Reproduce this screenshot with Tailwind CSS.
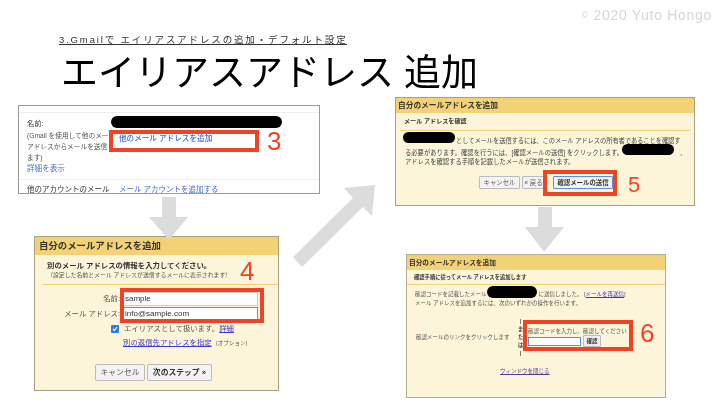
<!DOCTYPE html>
<html lang="ja">
<head>
  <meta charset="UTF-8">
  <title>エイリアスアドレス 追加</title>
  <script src="https://cdn.jsdelivr.net/npm/@tailwindcss/browser@4"></script>
</head>
<body class="bg-white">
<div class="relative w-[720px] h-[405px] overflow-hidden bg-white text-[#333] blur-[0.35px] font-['Liberation_Sans','Noto_Sans_CJK_JP',sans-serif]">

  <!-- Copyright -->
  <div class="absolute right-[8px] top-[7px] text-[14px] leading-[16px] tracking-[0.7px] text-[#d6d6d6] whitespace-nowrap"><span class="text-[9px] align-[2px]">©</span> 2020 Yuto Hongo</div>

  <!-- Heading -->
  <div class="absolute left-[59px] top-[35px] w-[288px] border-b border-[#333] text-[9.5px] leading-[9px] tracking-[1.85px] whitespace-nowrap text-[#333]">3.Gmailで エイリアスアドレスの追加・デフォルト設定</div>
  <h1 class="absolute left-[61px] top-[51px] text-[37px] leading-[38px] font-normal whitespace-nowrap text-black font-['Noto_Sans_CJK_JP',sans-serif]">エイリアスアドレス<span class="ml-[10px]">追加</span></h1>

  <!-- Panel 3 -->
  <div class="absolute left-[18px] top-[105px] w-[302px] h-[89px] overflow-hidden border border-[#9b9b9b] bg-white">
    <div class="mt-[6px] border-t border-[#eeeeee] px-[8px] pt-[5px]">
      <div class="grid grid-cols-[83px_1fr] gap-x-[1px]">
        <div class="whitespace-nowrap text-[6.7px] leading-[11px] text-[#555]">
          <div class="text-[7.2px] leading-[12px] text-[#333]">名前:</div>
          <div>(Gmail を使用して他のメー</div>
          <div>アドレスからメールを送信</div>
          <div>ます)</div>
          <div class="text-[7.6px] text-[#4a72c9]">詳細を表示</div>
        </div>
        <div class="pl-[8px] pt-[15px] text-[7.6px] leading-[12px] font-medium text-[#3f6bd0] whitespace-nowrap">他のメール アドレスを追加</div>
      </div>
      <div class="-mx-[8px] mt-[5px] border-t border-[#eeeeee] px-[8px] pt-[6px] flex text-[7.5px] leading-[7px] whitespace-nowrap">
        <span class="w-[92px] text-[#333]">他のアカウントのメール</span>
        <span class="text-[#3f6bd0]">メール アカウントを追加する</span>
      </div>
    </div>
  </div>
  <div class="absolute left-[111px] top-[116px] w-[171px] h-[12px] rounded-full bg-black"></div>

  <!-- Panel 4 -->
  <div class="absolute left-[34px] top-[236px] w-[245px] h-[155px] border border-[#a89f7d] bg-[#fdf5da]">
    <div class="h-[18px] bg-[#f3d275] px-[4px] text-[9.4px] leading-[18px] font-bold text-[#333] whitespace-nowrap">自分のメールアドレスを追加</div>
    <div class="ml-[7px] border-b border-[#f3d275] pl-[5px] pt-[5px] pb-[4px] whitespace-nowrap">
      <div class="text-[7.4px] leading-[11px] font-bold text-[#333]">別のメール アドレスの情報を入力してください。</div>
      <div class="text-[5.9px] leading-[9px] text-[#555]">（設定した名前とメール アドレスが送信するメールに表示されます）</div>
    </div>
    <div class="grid grid-cols-[85px_135px] gap-x-[3px] gap-y-[1px] pt-[7px] items-center text-[7.4px] text-[#555] whitespace-nowrap">
      <div class="text-right leading-[14px]">名前:</div>
      <div class="h-[14px] border border-[#cccccc] bg-white pl-[1px] text-[8px] leading-[12px] text-[#333]">sample</div>
      <div class="text-right leading-[13px]">メール アドレス:</div>
      <div class="h-[13px] border border-[#5b8fe0] bg-white pl-[1px] text-[8px] leading-[11px] text-[#333]">info@sample.com</div>
    </div>
    <div class="mt-[4px] ml-[76px] flex items-center gap-[5px] text-[7.4px] leading-[9px] whitespace-nowrap text-[#555]">
      <span class="flex h-[8px] w-[8px] items-center justify-center rounded-[1px] bg-[#2f7be8]">
        <svg width="6" height="6" viewBox="0 0 6 6"><path d="M1 3l1.4 1.5L5 1.2" fill="none" stroke="#fff" stroke-width="1.1"/></svg>
      </span>
      <span>エイリアスとして扱います。<span class="text-[#3a3ad0] underline">詳細</span></span>
    </div>
    <div class="mt-[5px] ml-[88px] text-[7.4px] leading-[10px] whitespace-nowrap text-[#555]">
      <span class="text-[#3a3ad0] underline">別の返信先アドレスを指定</span>
      <span class="ml-[2px] text-[5.6px]">(オプション)</span>
    </div>
    <div class="mt-[16px] ml-[60px] flex gap-[2px] text-[7.8px] leading-[15px] whitespace-nowrap">
      <span class="h-[17px] w-[50px] rounded-[2px] border border-[#bbbbbb] bg-[#f3f3f3] text-center text-[#555]">キャンセル</span>
      <span class="h-[17px] w-[65px] rounded-[2px] border border-[#bbbbbb] bg-[#f3f3f3] text-center font-bold text-[#333]">次のステップ »</span>
    </div>
  </div>

  <!-- Panel 5 -->
  <div class="absolute left-[395px] top-[97px] w-[300px] h-[109px] border border-[#a89f7d] bg-[#fdf5da]">
    <div class="h-[15px] bg-[#f3d275] px-[2px] text-[7.7px] leading-[15px] font-bold text-[#333] whitespace-nowrap">自分のメールアドレスを追加</div>
    <div class="mx-[4px] border-b border-[#f3d275] pl-[4px] pt-[3px] pb-[4px] text-[6.1px] leading-[10px] font-bold text-[#333] whitespace-nowrap">メール アドレスを確認</div>
    <div class="pl-[9px] pt-[3px] text-[6.3px] leading-[9.5px] text-[#444] whitespace-nowrap">
      <div class="tracking-[-0.1px]"><span class="inline-block w-[51px] h-[9px]"></span>としてメールを送信するには、このメール アドレスの所有者であることを確認す</div>
      <div>る必要があります。確認を行うには、[確認メールの送信] をクリックします。<span class="inline-block w-[57px] h-[9px]"></span>、</div>
      <div>アドレスを確認する手順を記載したメールが送信されます。</div>
    </div>
    <div class="mt-[9px] ml-[83px] flex gap-[2px] text-[6.4px] leading-[11px] whitespace-nowrap">
      <span class="h-[13px] w-[41px] rounded-[1px] border border-[#bbbbbb] bg-[#f3f3f3] text-center text-[#555]">キャンセル</span>
      <span class="h-[13px] w-[23px] rounded-[1px] border border-[#bbbbbb] bg-[#f3f3f3] text-center text-[#555]">« 戻る</span>
      <span class="ml-[6px] h-[13px] w-[60px] rounded-[1px] border border-[#5b8fe0] bg-[#f3f3f3] text-center font-bold text-[#333]">確認メールの送信</span>
    </div>
  </div>
  <div class="absolute left-[403px] top-[132px] w-[52px] h-[11px] rounded-full bg-black"></div>
  <div class="absolute left-[622px] top-[144px] w-[52px] h-[11px] rounded-full bg-black"></div>

  <!-- Panel 6 -->
  <div class="absolute left-[406px] top-[254px] w-[260px] h-[144px] border border-[#b5ad90] bg-[#fdf5da]">
    <div class="h-[15px] bg-[#f3d275] px-[2px] text-[6.7px] leading-[16px] font-bold text-[#333] whitespace-nowrap">自分のメールアドレスを追加</div>
    <div class="border-b border-[#f3d275] pl-[7px] pt-[3px] pb-[2px] text-[5.3px] leading-[9px] font-bold text-[#333] whitespace-nowrap">確認手順に従ってメール アドレスを追加します</div>
    <div class="pl-[8px] pt-[3px] text-[5.5px] leading-[8.6px] text-[#555] whitespace-nowrap">
      <div>確認コードを記載したメール<span class="inline-block w-[52px] h-[8px]"></span>に送信しました。 [<span class="text-[#3a3ad0] underline">メールを再送信</span>]</div>
      <div>メール アドレスを追加するには、次のいずれかの操作を行います。</div>
    </div>
    <div class="mt-[10px] flex items-center whitespace-nowrap text-[5.5px] text-[#555]">
      <div class="ml-[9px] w-[100px]">確認メールのリンクをクリックします</div>
      <div class="flex w-[9px] flex-col items-center text-[5.2px] leading-[8px] font-bold text-[#444]">
        <span>|</span><span>ま</span><span>た</span><span>は</span><span>|</span>
      </div>
      <div class="ml-[3px]">
        <div class="leading-[8px]">確認コードを入力し、確認してください</div>
        <div class="flex items-center gap-[2px]">
          <span class="h-[9px] w-[53px] border border-[#5b8fe0] bg-white"></span>
          <span class="h-[12px] w-[18px] rounded-[1px] border border-[#bbbbbb] bg-[#eeeeee] text-center leading-[10px] font-bold text-[#333]">確認</span>
        </div>
      </div>
    </div>
    <div class="mt-[10px] pl-[93px] text-[5.5px] leading-[8px] text-[#5a3a90] underline whitespace-nowrap">ウィンドウを閉じる</div>
  </div>
  <div class="absolute left-[487px] top-[286px] w-[50px] h-[12px] rounded-full bg-black"></div>

  <!-- Arrows -->
  <svg class="absolute left-0 top-0" width="720" height="405" viewBox="0 0 720 405">
    <polygon fill="#dcdcdc" points="162,197 176,197 176,217 188,217 169,240 149,217 162,217"/>
    <polygon fill="#dcdcdc" points="538,207 552,207 552,227 564,227 544,252 525,227 538,227"/>
    <polygon fill="#dcdcdc" points="293,257 302,267 363,207 372,216 375,185 344,188 353,198"/>
  </svg>

  <!-- Red highlights -->
  <div class="absolute left-[109px] top-[130px] w-[150px] h-[22px] border-[4px] border-[#ee4324]"></div>
  <div class="absolute left-[120px] top-[288px] w-[144px] h-[35px] border-[4px] border-[#ee4324]"></div>
  <div class="absolute left-[543px] top-[170px] w-[74px] h-[26px] border-[4px] border-[#ee4324]"></div>
  <div class="absolute left-[523px] top-[320px] w-[110px] h-[31px] border-[4px] border-[#ee4324]"></div>
  <div class="absolute left-[267px] top-[126px] text-[26px] leading-[30px] text-[#ee4324]">3</div>
  <div class="absolute left-[240px] top-[256px] text-[26px] leading-[30px] text-[#ee4324]">4</div>
  <div class="absolute left-[628px] top-[170px] text-[22px] leading-[30px] text-[#ee4324]">5</div>
  <div class="absolute left-[640px] top-[318px] text-[26px] leading-[30px] text-[#ee4324]">6</div>
</div>
</body>
</html>
